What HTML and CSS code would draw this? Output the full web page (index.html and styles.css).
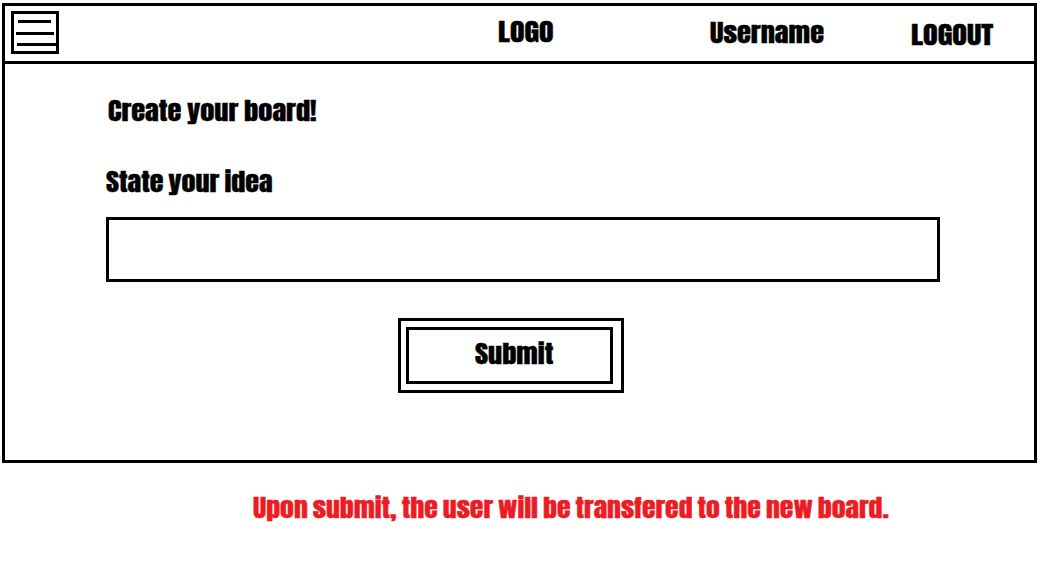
FILE: index.html
```html
<!DOCTYPE html>
<html lang="en">
<head>
<meta charset="utf-8">
<title>Create your board</title>
<link rel="stylesheet" href="styles.css">
</head>
<body>
<div class="frame">
  <header class="bar">
    <svg class="menu" width="48" height="43" viewBox="0 0 48 43" fill="none" stroke="#000" stroke-width="3" role="img" aria-label="Menu">
      <path d="M1.5 1.5h45v40h-45zM7 10.500h33M5 22.500h38M6 33.500h40"/>
    </svg>
    <span class="text logo">LOGO</span>
    <span class="text user">Username</span>
    <span class="text logout">LOGOUT</span>
  </header>
  <main class="content">
    <h1 class="text title">Create your board!</h1>
    <label class="text label" for="idea">State your idea</label>
    <input class="field" id="idea" type="text">
    <button class="submit" type="button"><span class="inner"><span class="text caption">Submit</span></span></button>
  </main>
</div>
<p class="text note">Upon submit, the user will be transfered to the new board.</p>
</body>
</html>
```
FILE: styles.css
```css
* {
  box-sizing: border-box;
}

body {
  margin: 0;
  padding: 3px 0 0 2px;
  background: #fff;
  color: #000;
}

.text {
  display: block;
  width: max-content;
  margin: 0;
  font: 400 24.5px/30px Impact, Anton, "Roboto Condensed", sans-serif;
  word-spacing: -1.3px;
  white-space: nowrap;
  -webkit-text-stroke: 0.4px currentColor;
  transform: scaleX(1.155);
  transform-origin: left;
}

.frame {
  width: 1035px;
  height: 460px;
  border: 3px solid #000;
}

.bar {
  display: flex;
  align-items: flex-start;
  height: 58px;
  padding: 5px 0 0 6px;
  border-bottom: 3px solid #000;
}

.menu {
  flex: none;
}

.logo {
  width: 212px;
  margin: 6px 0 0 439px;
  transform: scaleX(1.22);
}

.user {
  width: 201px;
  margin-top: 7px;
  transform: scaleX(1.16);
}

.logout {
  margin-top: 9px;
  transform: scaleX(1.23);
}

.content {
  display: flex;
  flex-direction: column;
  align-items: flex-start;
  padding: 32px 0 0 101px;
}

.title {
  margin-left: 2px;
  word-spacing: -0.7px;
  transform: scaleX(1.157);
}

.label {
  margin-top: 41px;
  transform: scaleX(1.148);
}

.field {
  width: 834px;
  height: 65px;
  margin: 20px 0 0;
  padding: 0 16px;
  border: 3px solid #000;
  border-radius: 0;
  font: 24px Impact, Anton, sans-serif;
}

.submit {
  width: 226px;
  height: 75px;
  margin: 36px 0 0 292px;
  padding: 6px 8px 6px 5px;
  border: 3px solid #000;
  border-radius: 0;
  background: #fff;
  color: #000;
  text-align: left;
}

.inner {
  display: block;
  width: 207px;
  height: 57px;
  padding: 9px 0 0 66px;
  border: 3px solid #000;
}

.note {
  margin: 30px 0 0 251px;
  color: #ed1c24;
  transform: scaleX(1.134);
}
```
